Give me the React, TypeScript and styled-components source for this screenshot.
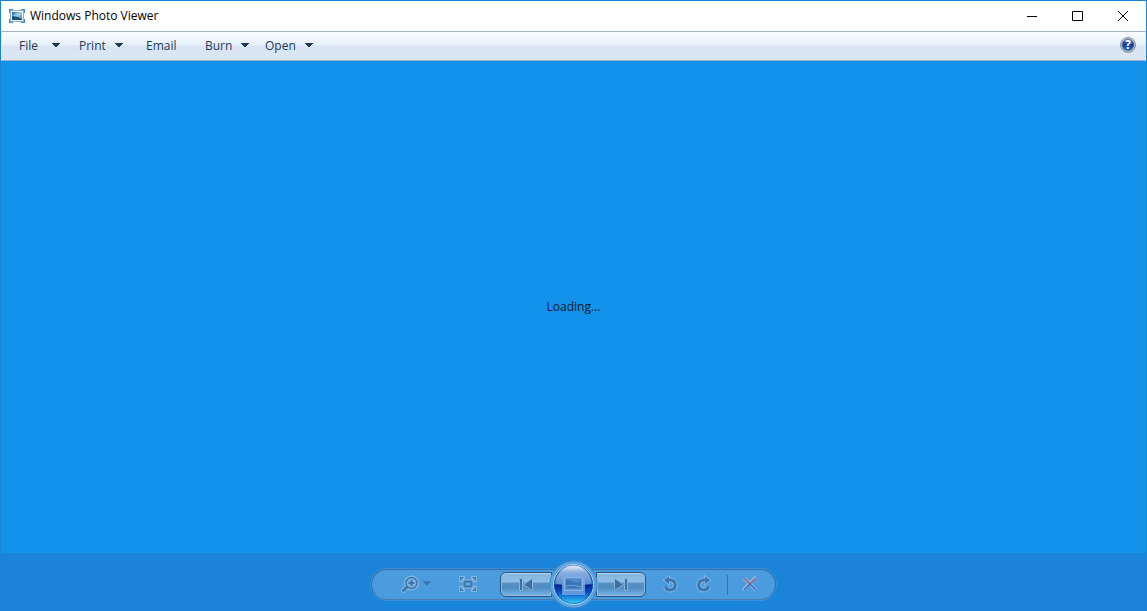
import React from "react";
import styled, { createGlobalStyle } from "styled-components";

const GlobalStyle = createGlobalStyle`
  * { box-sizing: border-box; }
  body {
    margin: 0;
    font-family: "Open Sans", "Noto Sans", sans-serif;
    font-size: 12px;
    line-height: 16px;
  }
  button { font: inherit; }
`;

const Window = styled.div`
  display: flex;
  flex-direction: column;
  min-height: 100vh;
  border: 1px solid #1883d7;
  border-bottom: 0;
  background: #1a84da;
`;

const TitleBar = styled.header`
  display: flex;
  align-items: center;
  height: 30px;
  padding-left: 8px;
  gap: 5px;
  background: #fff;
`;

const Title = styled.h1`
  flex: 1;
  margin: 0;
  font-size: 12px;
  line-height: 16px;
  font-weight: 400;
  color: #000;
`;

const IconButton = styled.button<{ $width: number }>`
  display: flex;
  flex: none;
  align-items: center;
  justify-content: center;
  gap: 4px;
  width: ${(p) => p.$width}px;
  height: 28px;
  padding: 0;
  border: 0;
  background: none;
  svg { display: block; flex: none; }
`;

const MenuBar = styled.nav`
  display: flex;
  align-items: center;
  height: 30px;
  padding: 0 4px 0 9px;
  border: 1px solid;
  border-color: #9fb1ca #e6edf6 #a3aec4;
  box-shadow: inset 0 -1px 0 #dfe8f3;
  background: linear-gradient(#fafdff 0, #e7f1fa 13px, #d9e5f3 14px, #dbe6f3 100%);
`;

const MenuButton = styled.button<{ $width: number }>`
  display: flex;
  align-items: center;
  gap: 9px;
  width: ${(p) => p.$width}px;
  height: 26px;
  padding: 0 0 0 8px;
  border: 0;
  background: none;
  color: #1e395b;
  text-align: left;
  svg { display: block; flex: none; }
`;

const MenuLabel = styled.span`
  min-width: 24px;
`;

const Spacer = styled.div`
  flex: 1;
`;

const Viewport = styled.main`
  display: flex;
  flex: 1;
  align-items: center;
  justify-content: center;
  background: #1292ea;
  color: #04152c;
`;

const Footer = styled.footer`
  display: flex;
  align-items: center;
  justify-content: center;
  height: 58px;
  padding-top: 5px;
`;

const Controls = styled.div`
  display: flex;
  align-items: flex-start;
  height: 31px;
  padding: 0 12px 0 24px;
  border: 1px solid #3b6c9d;
  border-bottom-color: #4a7cab;
  border-radius: 16px;
  background: #4b9bdf;
  box-shadow: 0 0 0 1px #3490df;
`;

const ToolGroup = styled.div<{ $gap: number; $before?: number; $after?: number }>`
  display: flex;
  align-items: center;
  gap: ${(p) => p.$gap}px;
  margin-left: ${(p) => p.$before ?? 0}px;
  margin-right: ${(p) => p.$after ?? 0}px;
`;

const StepButton = styled.button<{ $side: "left" | "right" }>`
  display: flex;
  align-items: center;
  justify-content: center;
  width: ${(p) => (p.$side === "left" ? 52 : 50)}px;
  height: 25px;
  margin-top: 2px;
  padding: 0;
  border: 1px solid #28557f;
  border-radius: ${(p) => (p.$side === "left" ? "6px 0 0 6px" : "0 6px 6px 0")};
  background: linear-gradient(#83b5de 0, #8fbfe5 9px, #5792c4 10px, #4f8dc2 15px, #7db8e6 100%);
  box-shadow: inset 0 1px 0 #b4d6f0, inset 0 0 0 1px #8dbde6;
  svg { display: block; }
`;

const SlideShowButton = styled.button`
  position: relative;
  width: 44px;
  height: 28px;
  padding: 0;
  border: 0;
  background: none;
  svg { position: absolute; left: -3px; top: -10px; display: block; }
`;

const Divider = styled.span`
  width: 1px;
  height: 20px;
  margin: 5px 9px 0 10px;
  background: #3975aa;
`;

const Arrow = ({ color = "#1e395b" }: { color?: string }) => (
  <svg width="8" height="6" viewBox="0 0 8 6" shapeRendering="crispEdges" aria-hidden="true">
    <path d="M0 0h8v1H0zM1 1h6v1H1zM2 2h4v1H2zM3 3h2v1H3z" fill={color} />
  </svg>
);

const AppIcon = () => (
  <svg width="16" height="14" viewBox="0 0 16 14" aria-hidden="true">
    <defs>
      <linearGradient id="photo" x1="0" y1="0" x2="1" y2="1">
        <stop offset="0" stopColor="#175ca8" />
        <stop offset=".45" stopColor="#a4d6ee" />
        <stop offset="1" stopColor="#2f7cc0" />
      </linearGradient>
    </defs>
    <path d="M1 4V1H4M12 1h3V4M15 10v3H12M4 13H1V10" fill="none" stroke="#3d88c8" strokeWidth="2" />
    <path d="M1.500 1.500h13v11h-13z" fill="#f5fafd" stroke="#8fb0cc" />
    <path d="M3 3h10v8H3z" fill="url(#photo)" />
    <path d="M3 7q5 0 10 3v1H3z" fill="#154f80" />
  </svg>
);

const HelpIcon = () => (
  <svg width="16" height="18" viewBox="0 0 16 18" aria-hidden="true">
    <defs>
      <linearGradient id="help" x1="0" y1="0" x2="0" y2="1">
        <stop offset="0" stopColor="#4a78c6" />
        <stop offset=".5" stopColor="#123c9a" />
        <stop offset="1" stopColor="#2f7ee0" />
      </linearGradient>
    </defs>
    <circle cx="8" cy="8" r="7.500" fill="#d7d4d0" stroke="#8b8988" />
    <circle cx="8" cy="8" r="6" fill="url(#help)" stroke="#4263a0" strokeWidth=".500" />
    <text x="8" y="12" textAnchor="middle" fontFamily="Open Sans, sans-serif" fontWeight="700" fontSize="12" fill="#fff">?</text>
  </svg>
);

const LIGHT = "#84b9e7";
const DARK = "#3c76ac";

const ZoomIcon = () => (
  <svg width="18" height="18" viewBox="0 0 18 18" aria-hidden="true">
    <path d="M0.500 17l6-5.500" stroke={LIGHT} strokeWidth="5" />
    <circle cx="10.500" cy="8" r="6.500" fill="#67a9e0" stroke={LIGHT} strokeWidth="2" />
    <path d="M1.500 16.500l5-5" stroke={DARK} strokeWidth="3" />
    <circle cx="10.500" cy="8" r="5.500" fill="#7ab4e5" stroke={DARK} strokeWidth="1.500" />
    <path d="M10.500 5v6M7.500 8h6" stroke={DARK} strokeWidth="2" />
  </svg>
);

const FitIcon = () => (
  <svg width="18" height="16" viewBox="0 0 18 16" aria-hidden="true">
    <path d="M0 0h6v3L3 6H0zM12 0h6v6h-3l-3-3zM0 10h3l3 3v3H0zM15 10h3v6h-6v-3z" fill={LIGHT} />
    <path d="M1 1h4L1 5zM13 1h4v4zM1 11l4 4H1zM17 11v4h-4z" fill={DARK} />
    <path d="M3.500 3.500h11v9h-11z" fill={LIGHT} />
    <path d="M5.500 5.500h7v5h-7z" fill="#68a7dc" stroke={DARK} strokeWidth="2" />
  </svg>
);

const StepIcon = ({ forward = false }: { forward?: boolean }) => (
  <svg width="16" height="13" viewBox="0 0 16 13" aria-hidden="true">
    <g transform={forward ? "matrix(-1 0 0 1 16 0)" : undefined} fill="#3d6e9c" stroke="#86b5dd">
      <path d="M1.500 .500h3v12h-3zM5.500 6.500l8-5.500h1v11h-1z" />
    </g>
  </svg>
);

const RotateIcon = ({ clockwise = false }: { clockwise?: boolean }) => (
  <svg width="16" height="18" viewBox="0 0 16 18" aria-hidden="true">
    <g transform={clockwise ? "matrix(-1 0 0 1 16 0)" : undefined} fill="none">
      <path d="M6 5h3a5 5 0 1 1-5.500 6.500" stroke={LIGHT} strokeWidth="5" />
      <path d="M7.500 .500v9.500L1 5z" fill={DARK} stroke={LIGHT} />
      <path d="M6 5h3a5 5 0 1 1-5.500 6.500" stroke={DARK} strokeWidth="3" />
    </g>
  </svg>
);

const DeleteIcon = () => (
  <svg width="16" height="16" viewBox="0 0 16 16" fill="none" aria-hidden="true">
    <path d="M2 2l12 12M14 1L1 14" stroke={LIGHT} strokeWidth="3.500" />
    <path d="M2 2l6 6M14 2L8 8" stroke="#a45b75" strokeWidth="1.500" />
    <path d="M8 8l6 6M8 8l-6 6" stroke="#5166a8" strokeWidth="1.500" />
  </svg>
);

const SlideShowOrb = () => (
  <svg width="50" height="50" viewBox="0 0 50 50" aria-hidden="true">
    <defs>
      <linearGradient id="orb" x1="0" y1="0" x2="0" y2="1">
        <stop offset="0" stopColor="#4c7fc4" />
        <stop offset=".48" stopColor="#2f69bb" />
        <stop offset=".52" stopColor="#04249a" />
        <stop offset=".7" stopColor="#0b50c6" />
        <stop offset="1" stopColor="#35dcff" />
      </linearGradient>
      <linearGradient id="gloss" x1="0" y1="0" x2="0" y2="1">
        <stop offset="0" stopColor="#f4f9ff" stopOpacity=".95" />
        <stop offset=".35" stopColor="#a9c6e9" stopOpacity=".7" />
        <stop offset="1" stopColor="#8fb7e4" stopOpacity=".45" />
      </linearGradient>
    </defs>
    <circle cx="24.500" cy="24.500" r="24" fill="#4b9bdf" />
    <circle cx="24.500" cy="24.500" r="23.500" fill="none" stroke="#4180b9" />
    <circle cx="24.500" cy="24.500" r="22" fill="none" stroke="#5aa5e6" strokeWidth="2" />
    <circle cx="24.500" cy="24.500" r="20" fill="url(#orb)" stroke="#b9d8f0" />
    <circle cx="24.500" cy="24.500" r="19" fill="none" stroke="#1c4e9e" strokeOpacity=".6" />
    <path d="M6.500 23.500a18 18 0 0 1 36 0q-8 2-18 2t-18-2z" fill="url(#gloss)" />
    <path d="M13 14h23v21H13z" fill="#79a8e2" fillOpacity=".8" />
    <path d="M15.500 17.500h18v13h-18z" fill="#5f95d3" stroke="#8ab4e4" />
    <path d="M17 19h15v10H17z" fill="#4f8acc" />
    <path d="M17 20q5 0 8 2t7-1v7H17z" fill="#3c74b6" />
    <path d="M17 26q7-2 15 1" fill="none" stroke="#6ea3dc" />
  </svg>
);

const menus = [
  { label: "File", width: 60, arrow: true },
  { label: "Print", width: 67, arrow: true },
  { label: "Email", width: 59, arrow: false },
  { label: "Burn", width: 60, arrow: true },
  { label: "Open", width: 66, arrow: true },
];

export default function App() {
  return (
    <>
      <GlobalStyle />
      <Window>
        <TitleBar>
          <AppIcon />
          <Title>Windows Photo Viewer</Title>
          <ToolGroup $gap={0}>
            <IconButton $width={46} aria-label="Minimize">
              <svg width="10" height="11" viewBox="0 0 10 11"><path d="M0 5.500h10" stroke="#000" /></svg>
            </IconButton>
            <IconButton $width={45} aria-label="Maximize">
              <svg width="11" height="11" viewBox="0 0 11 11"><path d="M.5.500h10v9h-10z" fill="none" stroke="#000" /></svg>
            </IconButton>
            <IconButton $width={46} aria-label="Close">
              <svg width="10" height="10" viewBox="0 0 10 10"><path d="M0 0l10 10M10 0L0 10" stroke="#000" /></svg>
            </IconButton>
          </ToolGroup>
        </TitleBar>
        <MenuBar>
          {menus.map((m) => (
            <MenuButton key={m.label} $width={m.width}>
              <MenuLabel>{m.label}</MenuLabel>
              {m.arrow && <Arrow />}
            </MenuButton>
          ))}
          <Spacer />
          <IconButton $width={26} aria-label="Help"><HelpIcon /></IconButton>
        </MenuBar>
        <Viewport>Loading...</Viewport>
        <Footer>
          <Controls>
            <ToolGroup $gap={17} $after={17}>
              <IconButton $width={40} aria-label="Zoom">
                <ZoomIcon />
                <Arrow color={DARK} />
              </IconButton>
              <IconButton $width={30} aria-label="Fit to window"><FitIcon /></IconButton>
            </ToolGroup>
            <StepButton $side="left" aria-label="Previous"><StepIcon /></StepButton>
            <SlideShowButton aria-label="Play slide show"><SlideShowOrb /></SlideShowButton>
            <StepButton $side="right" aria-label="Next"><StepIcon forward /></StepButton>
            <ToolGroup $gap={8} $before={11}>
              <IconButton $width={26} aria-label="Rotate counterclockwise"><RotateIcon /></IconButton>
              <IconButton $width={26} aria-label="Rotate clockwise"><RotateIcon clockwise /></IconButton>
            </ToolGroup>
            <Divider />
            <IconButton $width={26} aria-label="Delete"><DeleteIcon /></IconButton>
          </Controls>
        </Footer>
      </Window>
    </>
  );
}
